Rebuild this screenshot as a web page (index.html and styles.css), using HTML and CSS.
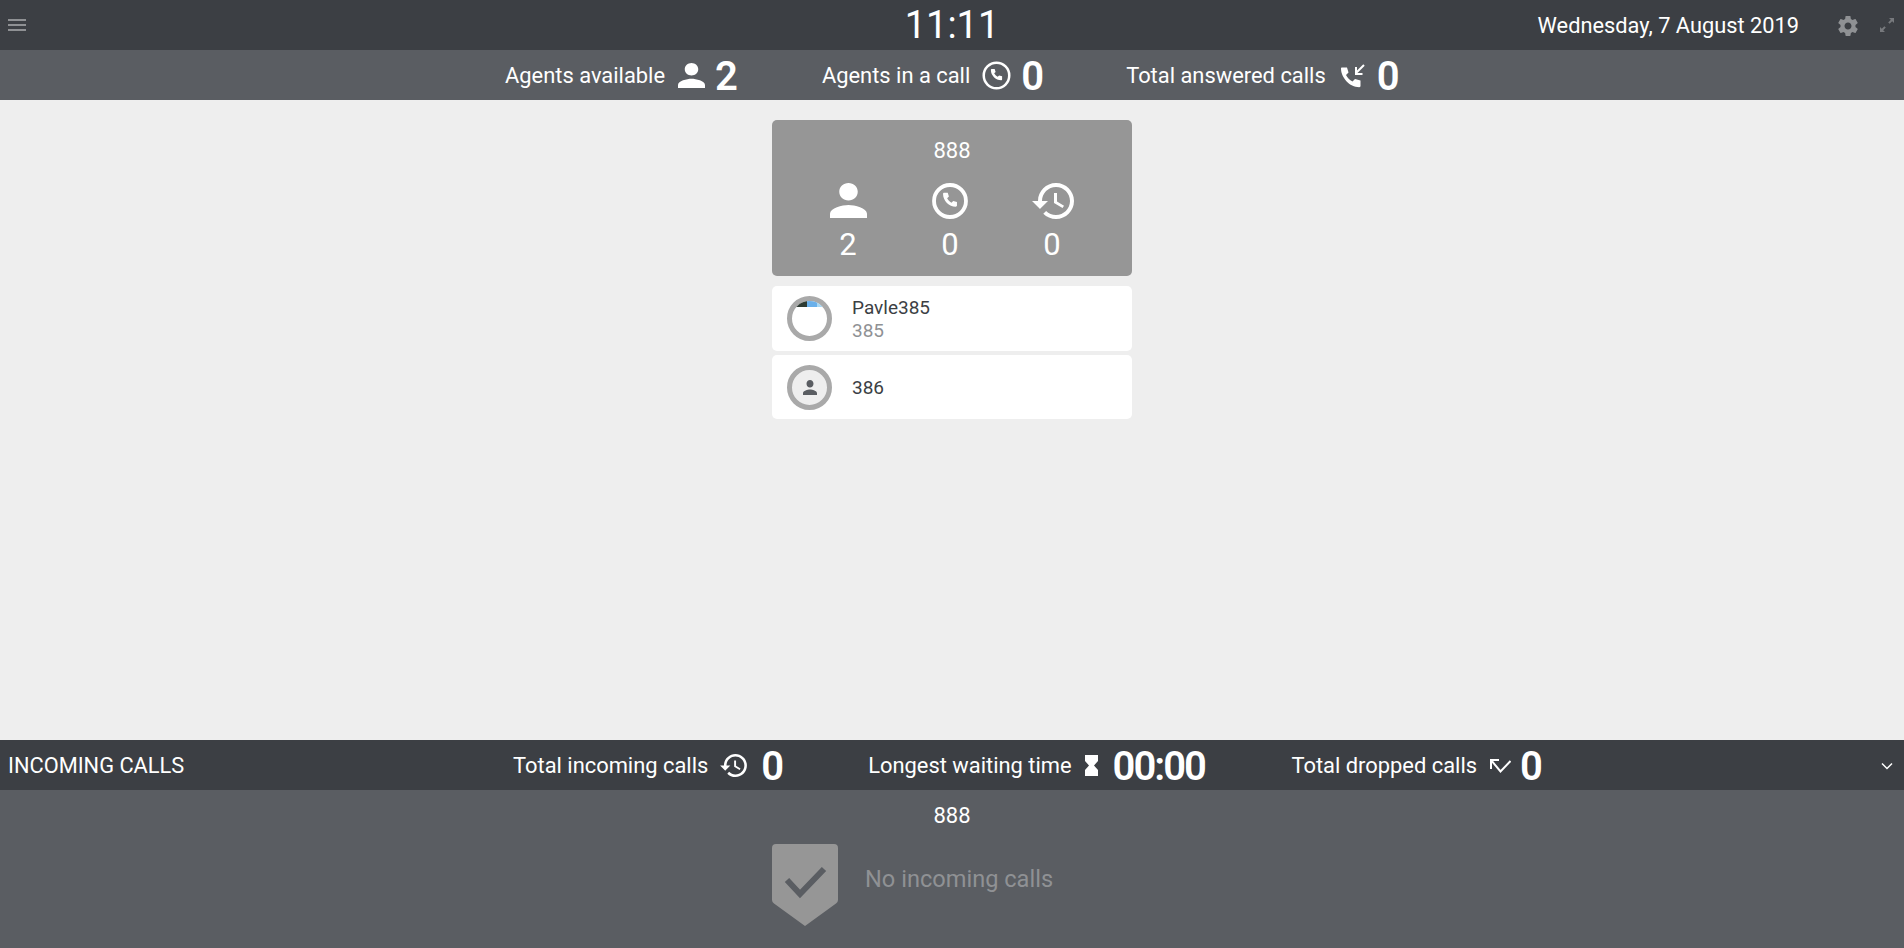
FILE: index.html
```html
<!DOCTYPE html>
<html lang="en">
<head>
<meta charset="utf-8">
<title>Wallboard</title>
<link rel="stylesheet" href="styles.css">
</head>
<body>
<header class="topbar">
  <svg class="menu-icon" viewBox="0 0 18 12"><path d="M0 0h18v2H0zM0 5h18v2H0zM0 10h18v2H0z"/></svg>
  <div class="clock">11:11</div>
  <div class="date">Wednesday, 7 August 2019</div>
  <svg class="gear-icon" viewBox="0 0 24 24"><path d="M19.43 12.98c.04-.32.07-.64.07-.98s-.03-.66-.07-.98l2.11-1.65c.19-.15.24-.42.12-.64l-2-3.46c-.12-.22-.39-.3-.61-.22l-2.49 1c-.52-.4-1.08-.73-1.69-.98l-.38-2.65C14.46 2.18 14.25 2 14 2h-4c-.25 0-.46.18-.49.42l-.38 2.65c-.61.25-1.17.59-1.69.98l-2.49-1c-.23-.09-.49 0-.61.22l-2 3.46c-.13.22-.07.49.12.64l2.11 1.65c-.04.32-.07.65-.07.98s.03.66.07.98l-2.11 1.65c-.19.15-.24.42-.12.64l2 3.46c.12.22.39.3.61.22l2.49-1c.52.4 1.08.73 1.69.98l.38 2.65c.03.24.24.42.49.42h4c.25 0 .46-.18.49-.42l.38-2.65c.61-.25 1.17-.59 1.69-.98l2.49 1c.23.09.49 0 .61-.22l2-3.46c.12-.22.07-.49-.12-.64l-2.11-1.65zM12 15.5c-1.93 0-3.5-1.57-3.5-3.5s1.57-3.5 3.5-3.5 3.5 1.57 3.5 3.5-1.57 3.5-3.5 3.5z"/></svg>
  <svg class="expand-icon" viewBox="0 0 16 16"><path d="M10 1h5v5l-1.8-1.8-2.6 2.6-1.4-1.4 2.6-2.6zM6 15H1v-5l1.8 1.8 2.6-2.6 1.4 1.4-2.6 2.6z"/></svg>
</header>

<section class="statbar statbar-agents">
  <div class="stat stat-available">
    <span class="stat-label">Agents available</span>
    <svg class="stat-icon icon-person" viewBox="4 4 16 16" preserveAspectRatio="none"><path d="M12 12c2.21 0 4-1.79 4-4s-1.79-4-4-4-4 1.79-4 4 1.79 4 4 4zm0 2c-2.67 0-8 1.34-8 4v2h16v-2c0-2.66-5.33-4-8-4z"/></svg>
    <span class="stat-value">2</span>
  </div>
  <div class="stat stat-incall">
    <span class="stat-label">Agents in a call</span>
    <svg class="stat-icon icon-phone" viewBox="0 0 30 30"><circle class="ring" cx="15" cy="15" r="13.2"/><path d="M10.2 8.2h2.9l1 3.1-1.5 1.5c.8 1.6 2 2.8 3.6 3.6l1.5-1.5 3.1 1v2.9c0 .6-.5 1-1 1-5.600 0-10.600-5-10.600-10.600 0-.5.400-1 1-1z"/></svg>
    <span class="stat-value">0</span>
  </div>
  <div class="stat stat-answered">
    <span class="stat-label">Total answered calls</span>
    <svg class="stat-icon icon-answered" viewBox="0 0 24 25"><path d="M1 3.500h5l1.500 5-2.500 2.500c1.500 3 3.500 5 6.500 6.500l2.500-2.500 5.500 1.500v5.500c0 .7-.5 1.200-1.200 1.200C8.500 23.200 0 13.500 0 4.500c0-.6.400-1 1-1z"/><path class="arrow" d="M23 1 15 9M15 3v7h6.500"/></svg>
    <span class="stat-value">0</span>
  </div>
</section>

<main class="queues">
  <article class="queue-card">
    <div class="queue-name">888</div>
    <div class="queue-metrics">
      <div class="metric">
        <svg class="metric-icon metric-person" viewBox="4 4 16 16" preserveAspectRatio="none"><path d="M12 12c2.210 0 4-1.790 4-4s-1.790-4-4-4-4 1.790-4 4 1.790 4 4 4zm0 2c-2.670 0-8 1.340-8 4v2h16v-2c0-2.660-5.330-4-8-4z"/></svg>
        <span>2</span>
      </div>
      <div class="metric">
        <svg class="metric-icon metric-phone" viewBox="0 0 30 30"><circle class="ring ring-thick" cx="15" cy="15" r="13.3"/><path d="M10.200 8.200h2.900l1 3.100-1.500 1.500c.8 1.600 2 2.800 3.600 3.600l1.500-1.500 3.100 1v2.900c0 .6-.5 1-1 1-5.600 0-10.600-5-10.600-10.600 0-.5.400-1 1-1z"/></svg>
        <span>0</span>
      </div>
      <div class="metric">
        <svg class="metric-icon metric-history" viewBox="1 3 21 18"><path d="M13 3c-4.970 0-9 4.030-9 9H1l3.890 3.890.07.14L9 12H6c0-3.870 3.130-7 7-7s7 3.130 7 7-3.130 7-7 7c-1.930 0-3.680-.79-4.940-2.060l-1.420 1.420C8.270 19.990 10.510 21 13 21c4.970 0 9-4.030 9-9s-4.030-9-9-9zm-1 5v5l4.280 2.540.72-1.210-3.500-2.080V8H12z"/></svg>
        <span>0</span>
      </div>
    </div>
  </article>
  <div class="agent-row agent-row-first">
    <div class="avatar avatar-photo"><div class="photo-strip"></div></div>
    <div class="agent-text">
      <div class="agent-name">Pavle385</div>
      <div class="agent-ext">385</div>
    </div>
  </div>
  <div class="agent-row">
    <div class="avatar">
      <svg class="avatar-person" viewBox="4 4 16 16" preserveAspectRatio="none"><path d="M12 12c2.210 0 4-1.790 4-4s-1.790-4-4-4-4 1.790-4 4 1.790 4 4 4zm0 2c-2.670 0-8 1.340-8 4v2h16v-2c0-2.660-5.330-4-8-4z"/></svg>
    </div>
    <div class="agent-text"><div class="agent-name">386</div></div>
  </div>
</main>

<section class="statbar statbar-incoming">
  <div class="incoming-title">INCOMING CALLS</div>
  <div class="stat stat-total">
    <span class="stat-label">Total incoming calls</span>
    <svg class="stat-icon icon-history" viewBox="1 3 21 18"><path d="M13 3c-4.970 0-9 4.030-9 9H1l3.890 3.890.07.14L9 12H6c0-3.870 3.130-7 7-7s7 3.130 7 7-3.130 7-7 7c-1.930 0-3.680-.79-4.940-2.060l-1.420 1.420C8.270 19.990 10.510 21 13 21c4.970 0 9-4.030 9-9s-4.030-9-9-9zm-1 5v5l4.280 2.540.72-1.210-3.500-2.080V8H12z"/></svg>
    <span class="stat-value">0</span>
  </div>
  <div class="stat stat-longest">
    <span class="stat-label">Longest waiting time</span>
    <svg class="stat-icon icon-hourglass" viewBox="0 0 13 21"><path d="M0 0h13v6l-4 4.500 4 4.500v6H0v-6l4-4.500-4-4.500z"/></svg>
    <span class="stat-value stat-time">00:00</span>
  </div>
  <div class="stat stat-dropped">
    <span class="stat-label">Total dropped calls</span>
    <svg class="stat-icon icon-dropped" viewBox="0 0 21 14"><path class="arrow" d="M1 10V1h8M1 1l9.500 11.500L20.500 2"/></svg>
    <span class="stat-value">0</span>
  </div>
  <svg class="chevron" viewBox="0 0 12 8"><path d="M1 1.500 6 6.500l5-5" /></svg>
</section>

<section class="incoming-panel">
  <div class="incoming-queue">888</div>
  <div class="empty-state">
    <svg class="shield" viewBox="0 0 66 82"><path class="shield-bg" d="M4 0h58a4 4 0 0 1 4 4v52a4 4 0 0 1-2 3.400L33 82 2 59.400A4 4 0 0 1 0 56V4a4 4 0 0 1 4-4z"/><path class="shield-check" d="M15 36 28 50 52 25"/></svg>
    <div class="empty-text">No incoming calls</div>
  </div>
</section>
</body>
</html>
```

FILE: styles.css
```css
* { box-sizing: border-box; }
html, body { height: 100%; }
body {
  margin: 0;
  display: flex;
  flex-direction: column;
  height: 948px;
  overflow: hidden;
  background: #eeeeee;
  color: #fff;
  font-family: Roboto, "Liberation Sans", sans-serif;
}
svg { display: block; fill: currentColor; flex: none; }

.topbar {
  position: relative;
  height: 50px;
  flex: none;
  display: flex;
  align-items: center;
  padding: 0 9px 0 8px;
  background: #3c3f44;
}
.menu-icon { width: 18px; height: 12px; color: #8f9194; }
.clock {
  position: absolute;
  left: 0;
  right: 0;
  top: 4px;
  text-align: center;
  font-size: 38px;
  line-height: 42px;
}
.date { margin-left: auto; padding-top: 2px; font-size: 21.8px; line-height: 50px; }
.gear-icon { width: 24px; height: 24px; color: #8f9194; margin-left: 37px; margin-top: 1px; }
.expand-icon { width: 16px; height: 16px; color: #77797d; margin-left: 19px; }

.statbar {
  position: relative;
  height: 50px;
  flex: none;
  display: flex;
  align-items: center;
}
.statbar-agents { background: #5a5d62; padding-left: 505px; }
.statbar-incoming { background: #3c3f44; padding-left: 513px; }
.stat { display: flex; align-items: center; }
.stat-label { font-size: 21.9px; line-height: 50px; padding-top: 2px; white-space: nowrap; }
.stat-value { font-size: 40px; font-weight: 600; line-height: 50px; padding-top: 4px; }
.stat-time { letter-spacing: -2px; }
.stat-icon { margin: 1px 10px 0 13px; }
.stat-incall { margin-left: 84px; }
.stat-answered { margin-left: 82px; }
.stat-longest { margin-left: 84px; }
.stat-dropped { margin-left: 86.5px; }
.icon-person { width: 27px; height: 25px; }
.icon-phone { width: 29px; height: 29px; margin: 1px 10px 0 12px; }
.icon-answered { width: 24px; height: 25px; margin: 2px 12px 0 15px; }
.icon-history { width: 27px; height: 23px; margin: 1px 14px 0 12px; }
.icon-hourglass { width: 13px; height: 21px; margin-right: 15px; }
.icon-dropped { width: 21px; height: 14px; margin-right: 9px; }
.ring { fill: none; stroke: currentColor; stroke-width: 2.6; }
.ring-thick { stroke-width: 3.2; }
.arrow { fill: none; stroke: currentColor; stroke-width: 2; }

.incoming-title {
  position: absolute;
  left: 8px;
  top: 1px;
  font-size: 21.8px;
  line-height: 50px;
}
.chevron {
  position: absolute;
  right: 11px;
  top: 22px;
  width: 12px;
  height: 8px;
  fill: none;
  stroke: #fff;
  stroke-width: 1.500;
}

.queues {
  flex: 1;
  display: flex;
  flex-direction: column;
  align-items: center;
  padding-top: 20px;
  background: #eeeeee;
}
.queue-card {
  width: 360px;
  height: 156px;
  border-radius: 5px;
  background: #969696;
  text-align: center;
}
.queue-name { font-size: 22px; line-height: 26px; padding-top: 18px; height: 50px; }
.queue-metrics {
  display: flex;
  justify-content: center;
  padding: 13px 4px 0 0;
}
.metric {
  width: 102px;
  display: flex;
  flex-direction: column;
  align-items: center;
  font-size: 31px;
  line-height: 36px;
}
.metric-icon { height: 36px; margin-bottom: 8px; }
.metric-person { width: 37px; height: 35px; margin-bottom: 9px; }
.metric-phone { width: 36px; }
.metric-history { width: 42px; margin-left: 2px; }

.agent-row {
  width: 360px;
  height: 64px;
  margin-top: 4px;
  padding-left: 15px;
  display: flex;
  align-items: center;
  border-radius: 5px;
  background: #fff;
}
.agent-row-first { margin-top: 10px; height: 65px; }
.avatar {
  width: 45px;
  height: 45px;
  flex: none;
  border: 5px solid #a9a9a9;
  border-radius: 50%;
  background: #eeeeee;
  display: flex;
  align-items: center;
  justify-content: center;
  overflow: hidden;
  color: #5a5d62;
}
.avatar-photo { background: #fff; align-items: flex-start; }
.photo-strip {
  width: 100%;
  height: 6px;
  background: linear-gradient(90deg, #2d3a32 0 15px, #6ab0ea 15px 25px, #a8d8f4 25px 31px, #fff 31px);
}
.avatar-person { width: 14px; height: 15px; }
.agent-text { margin-left: 20px; padding-top: 1px; font-size: 19px; line-height: 23px; }
.agent-name { color: #3c3f44; }
.agent-ext { color: #8f9194; }

.incoming-panel {
  height: 158px;
  flex: none;
  background: #5a5d62;
  display: flex;
  flex-direction: column;
  align-items: center;
}
.incoming-queue { font-size: 22px; line-height: 26px; padding-top: 13px; height: 54px; }
.empty-state {
  width: 360px;
  display: flex;
  align-items: center;
  color: #8f9194;
}
.shield { width: 66px; height: 82px; }
.shield-bg { fill: #969696; }
.shield-check { fill: none; stroke: #5a5d62; stroke-width: 6; }
.empty-text { margin-left: 27px; margin-top: -12px; font-size: 23.6px; color: #8f9194; }
```
